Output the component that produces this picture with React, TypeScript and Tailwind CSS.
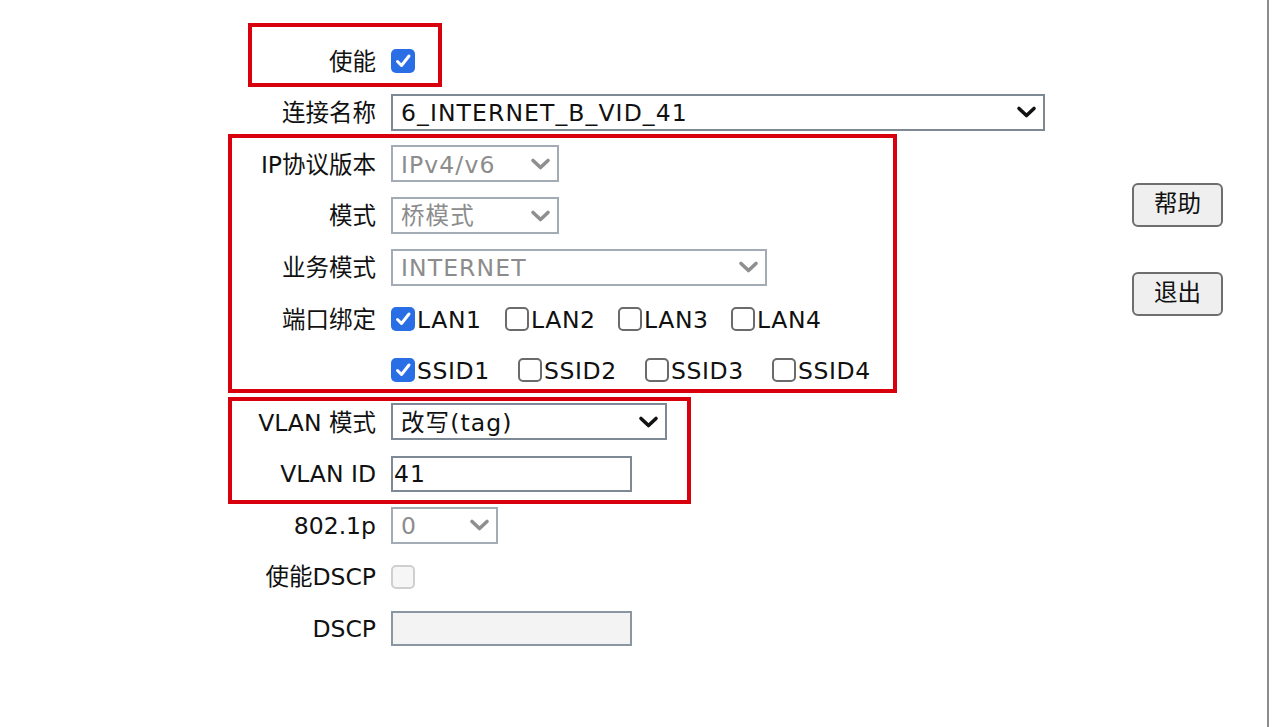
import React from "react";

const font = { fontFamily: '"DejaVu Sans", "Noto Sans CJK SC", sans-serif' };

const Chevron = ({ disabled }: { disabled?: boolean }) => (
  <svg width="21" height="14" viewBox="0 0 21 14" className="shrink-0">
    <path
      d="M3 3.5 L10.5 10.5 L18 3.5"
      fill="none"
      stroke={disabled ? "#8f8f8f" : "#111"}
      strokeWidth="3.6"
      strokeLinecap="round"
      strokeLinejoin="round"
    />
  </svg>
);

const Select = ({ value, w, disabled }: { value: string; w: string; disabled?: boolean }) => (
  <div
    className={`${w} h-[37px] flex items-center justify-between pl-[8px] pr-[6px] border-2 ${
      disabled ? "border-[#a3acb5] text-[#8c8c8c]" : "border-[#7d8995] text-[#111]"
    } bg-white`}
  >
    <span className="whitespace-nowrap leading-none pt-[3px] tracking-[1.1px]">{value}</span>
    <Chevron disabled={disabled} />
  </div>
);

const Check = ({ checked, disabled }: { checked?: boolean; disabled?: boolean }) =>
  checked ? (
    <span className="w-[24px] h-[24px] rounded-[5px] bg-[#2a6ee6] flex items-center justify-center shrink-0">
      <svg width="18" height="18" viewBox="0 0 18 18">
        <path d="M3.5 9.5 L7.5 13.5 L15 4" fill="none" stroke="#fff" strokeWidth="3" strokeLinecap="round" strokeLinejoin="round" />
      </svg>
    </span>
  ) : (
    <span
      className={`w-[24px] h-[24px] rounded-[5px] border-2 shrink-0 ${
        disabled ? "border-[#cfcfcf] bg-[#f6f6f6]" : "border-[#6b6b6b] bg-white"
      }`}
    />
  );

const Row = ({ label, children }: { label?: string; children: React.ReactNode }) => (
  <div className="flex items-center h-[51.6px]">
    <div className="w-[391px] pr-[15px] text-right whitespace-nowrap leading-none pt-[3px]">{label}</div>
    <div className="flex items-center">{children}</div>
  </div>
);

const CheckItem = ({ text, checked, w }: { text: string; checked?: boolean; w: string }) => (
  <div className={`${w} flex items-center gap-[2px]`}>
    <Check checked={checked} />
    <span className="leading-none pt-[3px] tracking-[0.6px]">{text}</span>
  </div>
);

export default function App() {
  return (
    <div className="flex w-[1280px] h-[727px] bg-white text-[#111] text-[23.5px] overflow-hidden" style={font}>
      <div className="relative w-[1132px] pt-[35px]">
        {/* annotation boxes */}
        <div className="absolute left-[248px] top-[23px] w-[194px] h-[64px] border-4 border-[#d9000d] pointer-events-none" />
        <div className="absolute left-[228px] top-[134px] w-[669px] h-[259px] border-4 border-[#d9000d] pointer-events-none" />
        <div className="absolute left-[228px] top-[397px] w-[463px] h-[107px] border-4 border-[#d9000d] pointer-events-none" />

        <Row label="使能">
          <Check checked />
        </Row>
        <Row label="连接名称">
          <Select value="6_INTERNET_B_VID_41" w="w-[654px]" />
        </Row>
        <Row label="IP协议版本">
          <Select value="IPv4/v6" w="w-[168px]" disabled />
        </Row>
        <Row label="模式">
          <Select value="桥模式" w="w-[168px]" disabled />
        </Row>
        <Row label="业务模式">
          <Select value="INTERNET" w="w-[376px]" disabled />
        </Row>
        <Row label="端口绑定">
          <CheckItem text="LAN1" checked w="w-[114px]" />
          <CheckItem text="LAN2" w="w-[113px]" />
          <CheckItem text="LAN3" w="w-[113px]" />
          <CheckItem text="LAN4" w="w-[113px]" />
        </Row>
        <Row>
          <CheckItem text="SSID1" checked w="w-[127px]" />
          <CheckItem text="SSID2" w="w-[127px]" />
          <CheckItem text="SSID3" w="w-[127px]" />
          <CheckItem text="SSID4" w="w-[110px]" />
        </Row>
        <Row label="VLAN 模式">
          <Select value="改写(tag)" w="w-[276px]" />
        </Row>
        <Row label="VLAN ID">
          <div className="w-[241px] h-[36px] border-2 border-[#7d8995] flex items-center pl-[1px]">
            <span className="leading-none pt-[3px] tracking-[1.1px]">41</span>
          </div>
        </Row>
        <Row label="802.1p">
          <Select value="0" w="w-[107px]" disabled />
        </Row>
        <Row label="使能DSCP">
          <Check disabled />
        </Row>
        <Row label="DSCP">
          <div className="w-[241px] h-[35px] border-2 border-[#8a96a2] bg-[#f3f3f3]" />
        </Row>
      </div>

      <div className="w-[91px] pt-[183px] flex flex-col gap-[45px]">
        <button className="h-[44px] rounded-[6px] border-2 border-[#6e6e6e] bg-[#efefef] text-[23.5px] text-[#111]">
          帮助
        </button>
        <button className="h-[44px] rounded-[6px] border-2 border-[#6e6e6e] bg-[#efefef] text-[23.5px] text-[#111]">
          退出
        </button>
      </div>

      <div className="ml-[44px] w-[2px] h-full bg-[#8c8c8c]" />
    </div>
  );
}
